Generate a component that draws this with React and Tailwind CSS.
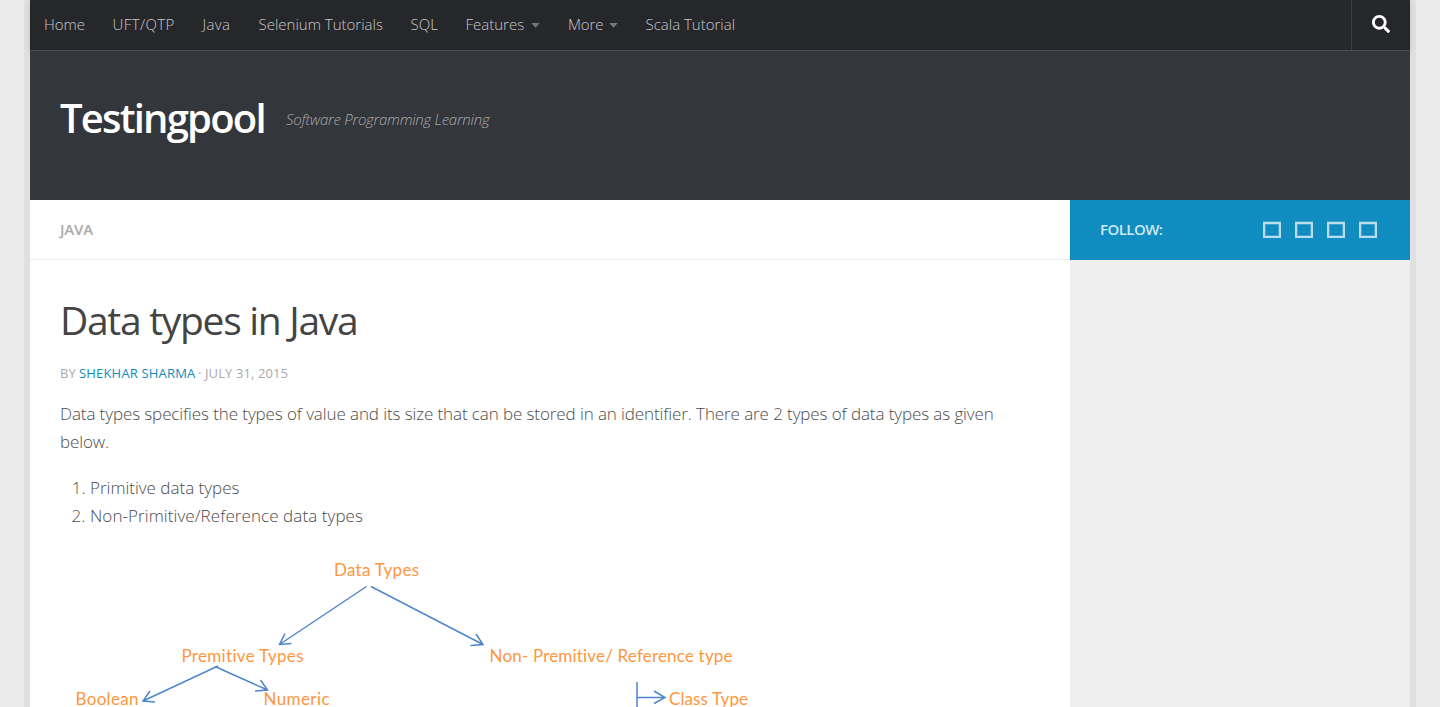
import React from 'react';

const navItems = [
  { label: 'Home', cls: 'w-[68.5px]' },
  { label: 'UFT/QTP', cls: 'w-[90px] tracking-[0.4px]' },
  { label: 'Java', cls: 'w-[56px] tracking-[0.35px]' },
  { label: 'Selenium Tutorials', cls: 'w-[152px]' },
  { label: 'SQL', cls: 'w-[55px]' },
  { label: 'Features', cls: 'w-[102.5px]', caret: true },
  { label: 'More', cls: 'w-[77.5px] tracking-[-0.1px]', caret: true },
  { label: 'Scala Tutorial', cls: 'w-[118px]' },
];

function NavBar() {
  return (
    <nav className="flex h-[51px] justify-between border-b border-[#4b4d50] bg-[#26272b] shadow-[0_0_6px_rgba(0,0,0,0.12)]">
      <ul className="flex">
        {navItems.map((item) => (
          <li
            key={item.label}
            className={`flex h-[50px] items-center justify-between pl-3.5 pr-3.5 text-[15px] font-light text-[#c8c8c9] ${item.cls}`}
          >
            <span className="whitespace-nowrap pb-0.5 leading-5">{item.label}</span>
            {item.caret && (
              <svg className="h-[5px] w-[9px] shrink-0" viewBox="0 0 9 5">
                <path d="M0.3 0h8.4L4.5 4.8z" fill="#77787b" />
              </svg>
            )}
          </li>
        ))}
      </ul>
      <button className="flex w-[59px] items-center justify-center border-l border-[#3c3d41]" aria-label="Search">
        <svg className="mb-0.5 h-[18px] w-[18px]" viewBox="0 0 512 512" fill="#fff">
          <path d="M505 442.7L405.3 343c-4.500-4.500-10.600-7-17-7H372c27.600-35.300 44-79.700 44-128C416 93.100 322.900 0 208 0S0 93.100 0 208s93.100 208 208 208c48.300 0 92.700-16.400 128-44v16.300c0 6.400 2.500 12.500 7 17l99.700 99.700c9.400 9.400 24.600 9.400 33.900 0l28.300-28.300c9.400-9.400 9.400-24.600.1-34zM208 336c-70.700 0-128-57.200-128-128 0-70.700 57.200-128 128-128 70.700 0 128 57.200 128 128 0 70.700-57.200 128-128 128z" />
        </svg>
      </button>
    </nav>
  );
}

function Branding() {
  return (
    <header className="flex h-[149px] items-start bg-[#33363b] px-[30px] pt-[37px]">
      <div className="w-[226px] whitespace-nowrap text-[40px] font-semibold leading-[60px] tracking-[-1.8px] text-white">
        Testingpool
      </div>
      <p className="whitespace-nowrap pt-px text-[15px] font-light italic leading-[60px] tracking-[-0.25px] text-[#a9aaac]">
        Software Programming Learning
      </p>
    </header>
  );
}

function TypesDiagram() {
  return (
    <svg className="block h-[157px] w-[740px]" viewBox="60 550 740 157">
      <g fill="none" stroke="#4f86cb" strokeWidth="1.500">
        <path d="M366.500 586.500L279.500 644.500M285 633.500L279.500 644.500L291.500 643.500" />
        <path d="M371 586.500L483 644.500M476 634L483 644.500L470.500 645.500" />
        <path d="M218 666L143 701M150 691L143 701L155 702" />
        <path d="M215 666.500L267.500 690M260.500 680L267.500 690L255 691" />
        <path d="M637 682V707M637 697.500H665M654 691L665 697.500L654 703.500" />
      </g>
      <g
        className="font-['Lato',sans-serif] text-[17px] [font-variant-ligatures:none]"
        fill="#ff9640"
      >
        <text x="334" y="575.500" textLength="85">Data Types</text>
        <text x="181.500" y="662" textLength="122">Premitive Types</text>
        <text x="489.500" y="662" textLength="243">Non- Premitive/ Reference type</text>
        <text x="75.500" y="705" textLength="63">Boolean</text>
        <text x="263.500" y="705" textLength="66">Numeric</text>
        <text x="669" y="705" textLength="79">Class Type</text>
      </g>
    </svg>
  );
}

function Article() {
  return (
    <main className="w-[1040px] bg-white">
      <div className="flex h-[60px] items-center border-b border-[#eeeeee] px-[30px] text-[15px] font-semibold tracking-[-0.15px] text-[#aaaaaa]">
        JAVA
      </div>
      <article className="px-[30px] pt-[30px]">
        <h1 className="whitespace-nowrap text-[39px] leading-[60px] tracking-[-1.3px] text-[#444444]">
          Data types in Java
        </h1>
        <p className="mt-[13px] flex whitespace-nowrap text-[13px] leading-5 text-[#aaaaaa]">
          <span className="w-[19px]">BY</span>
          <span className="w-[119px] tracking-[0.18px] text-[#118cc0]">SHEKHAR SHARMA</span>
          <span className="tracking-[0.1px]">· JULY 31, 2015</span>
        </p>
        <div className="pt-[17px] text-[17px] font-light leading-7 text-[#4b4b4b]">
          <p className="w-[960px] tracking-[-0.1px]">
            Data types specifies the types of value and its size that can be stored in an identifier. There are 2
            types of data types as given below.
          </p>
          <ol className="mt-[18px] list-decimal pl-[30px]">
            <li>Primitive data types</li>
            <li className="tracking-[0.08px]">Non-Primitive/Reference data types</li>
          </ol>
        </div>
        <div className="mt-5">
          <TypesDiagram />
        </div>
      </article>
    </main>
  );
}

function Sidebar() {
  return (
    <aside className="w-[340px] bg-[#efefef]">
      <div className="flex h-[60px] items-center justify-between bg-[#118cc0] pl-[30px] pr-[33px]">
        <span className="pb-0.5 text-[15px] font-semibold tracking-[-0.55px] text-[#d0e8f2]">FOLLOW:</span>
        <div className="flex gap-3.5">
          {[0, 1, 2, 3].map((n) => (
            <span
              key={n}
              className="h-4 w-[18px] border-2 border-[#b8dcec] shadow-[0_-1px_0_rgba(184,220,236,0.3),inset_0_0_0_1px_rgba(184,220,236,0.3)]"
            />
          ))}
        </div>
      </div>
    </aside>
  );
}

export default function App() {
  return (
    <div className="h-[707px] overflow-hidden bg-[#eaeaea] px-[30px] font-['Open_Sans',sans-serif]">
      <div className="flex h-full flex-col shadow-[0_0_0_6px_#e0e0e0]">
        <NavBar />
        <Branding />
        <div className="flex min-h-0 flex-1 overflow-hidden">
          <Article />
          <Sidebar />
        </div>
      </div>
    </div>
  );
}
